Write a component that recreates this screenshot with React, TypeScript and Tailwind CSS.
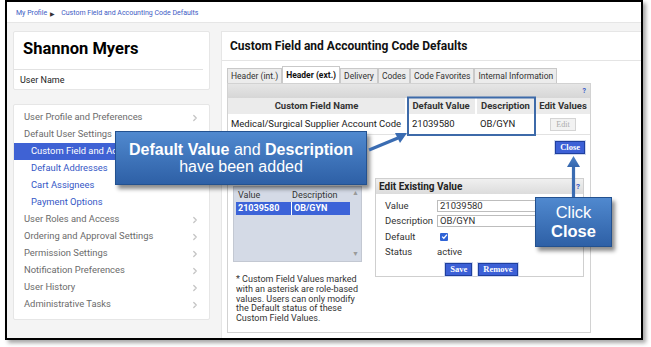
import { ChevronRight } from "lucide-react";

const navItems: { label: string; sub?: boolean; active?: boolean; chevron?: boolean }[] = [
  { label: "User Profile and Preferences", chevron: true },
  { label: "Default User Settings" },
  { label: "Custom Field and Acco", sub: true, active: true },
  { label: "Default Addresses", sub: true },
  { label: "Cart Assignees", sub: true },
  { label: "Payment Options", sub: true },
  { label: "User Roles and Access", chevron: true },
  { label: "Ordering and Approval Settings", chevron: true },
  { label: "Permission Settings", chevron: true },
  { label: "Notification Preferences", chevron: true },
  { label: "User History", chevron: true },
  { label: "Administrative Tasks", chevron: true },
];

const tabs = ["Header (int.)", "Header (ext.)", "Delivery", "Codes", "Code Favorites", "Internal Information"];

function Sidebar() {
  return (
    <div className="w-[197px] ml-[6px] mt-[8px] flex flex-col shrink-0">
      {/* name card */}
      <div className="h-[59px] bg-white border border-[#e6e6e6] rounded-[2px] flex flex-col">
        <div className="h-[37px] pl-[9px] pt-[7px] text-[16.5px] font-bold text-black leading-[20px]">Shannon Myers</div>
        <div className="mr-[6px] border-t border-[#e2e2e2]" />
        <div className="pl-[6px] pt-[4px] text-[9px] text-[#222] leading-[12px]">User Name</div>
      </div>

      {/* nav card */}
      <div className="mt-[14px] h-[216px] bg-white border border-[#e6e6e6] rounded-[2px] pt-[4px] flex flex-col">
        {navItems.map((item) => (
          <div
            key={item.label}
            className={`h-[17px] flex items-center justify-between pr-[9px] text-[9.4px] whitespace-nowrap overflow-hidden ${
              item.active ? "bg-[#3f62d4] text-white" : item.sub ? "text-[#3557c6]" : "text-[#6b6b6b]"
            } ${item.sub ? "pl-[17px]" : "pl-[10px]"}`}
          >
            <span>{item.label}</span>
            {item.chevron && <ChevronRight size={10} strokeWidth={3} className="text-[#c4c4c4] shrink-0" />}
          </div>
        ))}
      </div>
    </div>
  );
}

function Tabs() {
  return (
    <div className="flex items-end h-[17px] mt-[5px]">
      {tabs.map((t) => {
        const active = t === "Header (ext.)";
        return (
          <div
            key={t}
            className={`border border-[#c9c9c9] px-[3px] flex items-center text-[8.5px] whitespace-nowrap ${
              active ? "h-[17px] bg-white font-bold border-b-0 text-[#111]" : "h-[15px] bg-[#ececec] text-[#333] border-b-0"
            }`}
          >
            {t}
          </div>
        );
      })}
    </div>
  );
}

function FieldTable() {
  return (
    <div className="text-[9.5px] text-[#222]">
      <div className="flex h-[17px] font-bold text-[#333] border-b border-white">
        <div className="w-[179px] bg-[#ebebeb] flex items-center justify-center border-r-2 border-white">Custom Field Name</div>
        <div className="w-[70px] bg-[#ebebeb] flex items-center justify-center border-r-2 border-white">Default Value</div>
        <div className="w-[59px] bg-[#ebebeb] flex items-center justify-center border-r-2 border-white">Description</div>
        <div className="flex-1 bg-[#ebebeb] flex items-center justify-center">Edit Values</div>
      </div>
      <div className="flex h-[20px] items-center border-b border-[#e2e2e2]">
        <div className="w-[179px] pl-[3px]">Medical/Surgical Supplier Account Code</div>
        <div className="w-[70px] pl-[5px]">21039580</div>
        <div className="w-[59px] pl-[3px]">OB/GYN</div>
        <div className="flex-1 flex justify-center">
          <div className="h-[13px] px-[5px] border border-[#d4d4d4] bg-[#f2f2f2] text-[#aaa] text-[8px] flex items-center font-['Liberation_Serif',serif]">
            Edit
          </div>
        </div>
      </div>
    </div>
  );
}

function BlueButton({ label }: { label: string }) {
  return (
    <div className="h-[13px] px-[4px] bg-[#3c60d6] border border-[#1f3f9e] text-white text-[8.5px] font-bold flex items-center font-['Liberation_Serif',serif] shadow-[0_0_0_1px_#cfd8ee]">
      {label}
    </div>
  );
}

function ValueList() {
  return (
    <div className="w-[129px] shrink-0 mt-[8px]">
      <div className="h-[76px] bg-[#d4dae6] border border-[#c3c8d2] flex">
        <div className="flex-1 pl-[2px] pt-[2px] text-[9px]">
          <div className="flex h-[13px] items-center text-[#333]">
            <span className="w-[56px] pl-[2px]">Value</span>
            <span>Description</span>
          </div>
          <div className="flex h-[13px] items-center font-bold text-white">
            <span className="w-[56px] h-full pl-[2px] bg-[#3c63d8] flex items-center border-r border-white">21039580</span>
            <span className="flex-1 h-full pl-[2px] bg-[#3c63d8] flex items-center">OB/GYN</span>
          </div>
        </div>
        <div className="w-[11px] flex flex-col justify-between items-center py-[3px] text-[#9a9a9a] text-[7px] leading-none">
          <span>▲</span>
          <span>▼</span>
        </div>
      </div>
      <p className="mt-[13px] pl-[3px] text-[9px] leading-[9.8px] text-[#333]">
        * Custom Field Values marked with an asterisk are role-based values. Users can only modify the Default status of these Custom Field Values.
      </p>
    </div>
  );
}

function EditBox() {
  const rows = [
    { label: "Value", value: "21039580" },
    { label: "Description", value: "OB/GYN" },
  ];
  return (
    <div className="w-[209px] h-[99px] ml-[13px] border border-[#cfcfcf] bg-white flex flex-col">
      <div className="h-[15px] bg-gradient-to-b from-[#f0f0f0] to-[#dcdcdc] flex items-center justify-between px-[3px]">
        <span className="text-[10px] font-bold text-[#222]">Edit Existing Value</span>
        <span className="text-[8px] text-[#3557c6] font-bold">?</span>
      </div>
      <div className="pl-[9px] pt-[4px] text-[9.5px] text-[#333]">
        {rows.map((r) => (
          <div key={r.label} className="flex items-center h-[15.5px]">
            <span className="w-[52px]">{r.label}</span>
            <div className="w-[110px] h-[12px] border border-[#bdbdbd] pl-[2px] flex items-center">{r.value}</div>
          </div>
        ))}
        <div className="flex items-center h-[15.5px]">
          <span className="w-[52px]">Default</span>
          <div className="ml-[3px] w-[8px] h-[8px] bg-[#2f63d6] rounded-[1px] flex items-center justify-center">
            <svg width="7" height="7" viewBox="0 0 8 8">
              <path d="M1.3 4.2 L3.2 6 L6.8 1.8" stroke="white" strokeWidth="1.4" fill="none" />
            </svg>
          </div>
        </div>
        <div className="flex items-center h-[15.5px]">
          <span className="w-[52px]">Status</span>
          <span>active</span>
        </div>
      </div>
      <div className="flex justify-center gap-[6px] mt-[3px] pl-[4px]">
        <BlueButton label="Save" />
        <BlueButton label="Remove" />
      </div>
    </div>
  );
}

function MainCard() {
  return (
    <div className="ml-[11px] mt-[8px] flex-1 bg-white border-l border-t border-[#e6e6e6] flex flex-col">
      <div className="h-[29px] pl-[8px] flex items-center text-[12px] font-bold text-[#111] border-b border-[#e4e4e4]">
        Custom Field and Accounting Code Defaults
      </div>
      <div className="pl-[5px]">
        <Tabs />
        <div className="w-[364px] h-[250px] border border-[#d2d2d2] flex flex-col">
          <div className="h-[14px] bg-gradient-to-b from-[#e6e6e6] to-[#d6d6d6] flex items-center justify-end pr-[4px] text-[7px] font-bold text-[#3557c6]">
            ?
          </div>
          <FieldTable />
          <div className="flex justify-end pr-[5px] pt-[6px]">
            <BlueButton label="Close" />
          </div>
          <div className="flex pl-[5px] mt-[24px]">
            <ValueList />
            <EditBox />
          </div>
        </div>
      </div>
    </div>
  );
}

function Overlays() {
  return (
    <>
      <div className="absolute left-[115px] top-[131px] w-[252px] h-[54px] bg-gradient-to-b from-[#5089cf] to-[#2e60a6] border border-[#23518f] shadow-[3px_4px_4px_rgba(0,0,0,0.45)] flex flex-col items-center justify-center text-white text-[16px] leading-[17px] font-['Liberation_Sans',Arial,sans-serif]">
        <div>
          <b>Default Value</b> and <b>Description</b>
        </div>
        <div>have been added</div>
      </div>
      <div className="absolute left-[535px] top-[197px] w-[77px] h-[50px] bg-gradient-to-b from-[#5089cf] to-[#2e60a6] border border-[#23518f] shadow-[3px_4px_4px_rgba(0,0,0,0.45)] flex flex-col items-center justify-center text-white text-[16.5px] leading-[19px] font-['Liberation_Sans',Arial,sans-serif]">
        <div>Click</div>
        <div className="font-bold">Close</div>
      </div>
      <svg className="absolute left-0 top-0 pointer-events-none" width="651" height="347">
        <defs>
          <linearGradient id="arr" x1="0" y1="0" x2="0" y2="1">
            <stop offset="0" stopColor="#4d82c8" />
            <stop offset="1" stopColor="#3466ad" />
          </linearGradient>
        </defs>
        <line x1="369" y1="150" x2="398" y2="138" stroke="#3a6cb2" strokeWidth="3.2" />
        <polygon points="407,133 395,133 400,143" fill="#3a6cb2" />
        <rect x="408" y="97.5" width="127" height="37.5" fill="none" stroke="#3d6aa9" strokeWidth="2" />
        <line x1="573.5" y1="197" x2="573.5" y2="166" stroke="#3a6cb2" strokeWidth="3.2" />
        <polygon points="567,167 580,167 573.5,156" fill="url(#arr)" />
      </svg>
    </>
  );
}

export default function App() {
  return (
    <div className="relative w-[651px] h-[347px] bg-white overflow-hidden font-['Roboto','Liberation_Sans',sans-serif]">
      <div className="ml-[5px] w-[638px] h-[340px] border-2 border-black shadow-[3px_3px_4px_rgba(0,0,0,0.35)] bg-[#f4f4f4] flex flex-col overflow-hidden">
        <div className="h-[21px] shrink-0 bg-white border-b border-[#e6e6e6] flex items-center pl-[9px] pt-[3px] text-[7px] text-[#3d5bc4] gap-[3px]">
          <span>My Profile</span>
          <span className="text-[#333] text-[6px]">▶</span>
          <span className="ml-[3px]">Custom Field and Accounting Code Defaults</span>
        </div>
        <div className="flex flex-1">
          <Sidebar />
          <MainCard />
        </div>
      </div>
      <Overlays />
    </div>
  );
}
